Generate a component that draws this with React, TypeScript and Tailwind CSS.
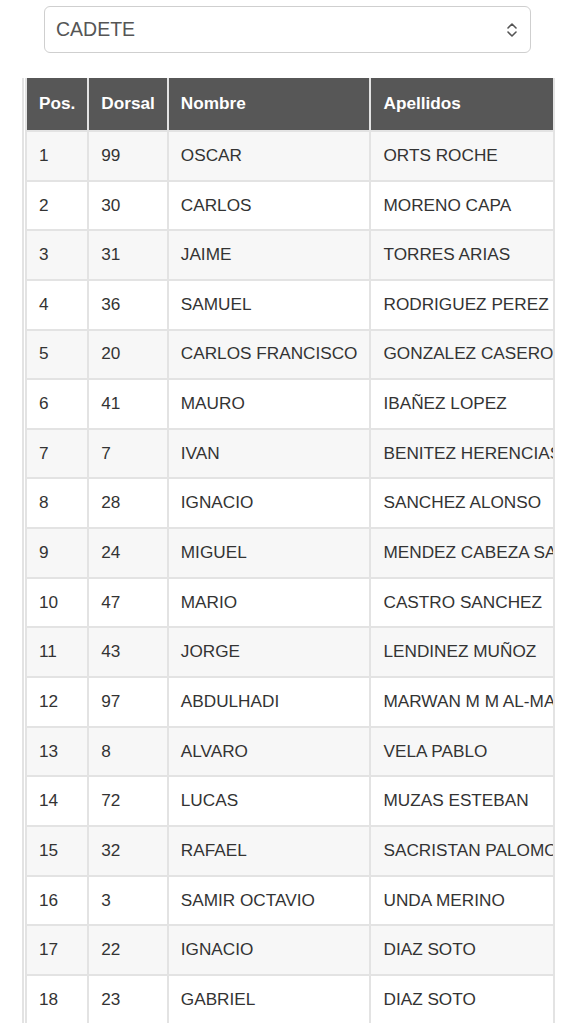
import React from "react";

const ROWS: [number, number, string, string][] = [
  [1, 99, "OSCAR", "ORTS ROCHE"],
  [2, 30, "CARLOS", "MORENO CAPA"],
  [3, 31, "JAIME", "TORRES ARIAS"],
  [4, 36, "SAMUEL", "RODRIGUEZ PEREZ"],
  [5, 20, "CARLOS FRANCISCO", "GONZALEZ CASERO"],
  [6, 41, "MAURO", "IBAÑEZ LOPEZ"],
  [7, 7, "IVAN", "BENITEZ HERENCIAS"],
  [8, 28, "IGNACIO", "SANCHEZ ALONSO"],
  [9, 24, "MIGUEL", "MENDEZ CABEZA SANZ"],
  [10, 47, "MARIO", "CASTRO SANCHEZ"],
  [11, 43, "JORGE", "LENDINEZ MUÑOZ"],
  [12, 97, "ABDULHADI", "MARWAN M M AL-MASRI"],
  [13, 8, "ALVARO", "VELA PABLO"],
  [14, 72, "LUCAS", "MUZAS ESTEBAN"],
  [15, 32, "RAFAEL", "SACRISTAN PALOMO"],
  [16, 3, "SAMIR OCTAVIO", "UNDA MERINO"],
  [17, 22, "IGNACIO", "DIAZ SOTO"],
  [18, 23, "GABRIEL", "DIAZ SOTO"],
];

const App = () => {
  return (
    <div className="w-[561px] h-[1023px] overflow-hidden bg-white text-[#333] font-['Liberation_Sans',Arial,sans-serif]">
      <div className="pt-[6px] pl-[44px]">
        <div className="w-[487px] h-[47px] border border-[#cfcfcf] rounded-[6px] flex items-center justify-between pl-[11px] pr-[11px]">
          <span className="text-[19.5px] text-[#555]">CADETE</span>
          <svg width="14" height="16" viewBox="0 0 14 16" fill="none" stroke="#555" strokeWidth="1.6" strokeLinecap="round" strokeLinejoin="round">
            <path d="M3 6 L7 2 L11 6" />
            <path d="M3 10 L7 14 L11 10" />
          </svg>
        </div>
      </div>

      <div className="mt-[25px] ml-[22px] w-[533px] border-x-2 border-[#e3e3e3] overflow-hidden">
        <table className="ml-[1px] border-collapse text-[17.2px] whitespace-nowrap">
          <thead>
            <tr className="bg-[#575757] text-white font-bold text-left">
              <th className="w-[62px] h-[53px] px-[12px] border-2 border-[#e3e3e3] border-t-0">Pos.</th>
              <th className="w-[80px] px-[12px] border-2 border-[#e3e3e3] border-t-0">Dorsal</th>
              <th className="w-[204px] px-[12px] border-2 border-[#e3e3e3] border-t-0">Nombre</th>
              <th className="w-[260px] px-[12px] border-2 border-[#e3e3e3] border-t-0">Apellidos</th>
            </tr>
          </thead>
          <tbody>
            {ROWS.map((r, i) => (
              <tr key={r[0]} className={i % 2 === 0 ? "bg-[#f7f7f7]" : "bg-white"}>
                <td className="h-[49.65px] px-[12px] border-2 border-[#e3e3e3]">{r[0]}</td>
                <td className="px-[12px] border-2 border-[#e3e3e3]">{r[1]}</td>
                <td className="px-[12px] border-2 border-[#e3e3e3]">{r[2]}</td>
                <td className="px-[12px] border-2 border-[#e3e3e3]">{r[3]}</td>
              </tr>
            ))}
          </tbody>
        </table>
      </div>
    </div>
  );
};

export default App;
